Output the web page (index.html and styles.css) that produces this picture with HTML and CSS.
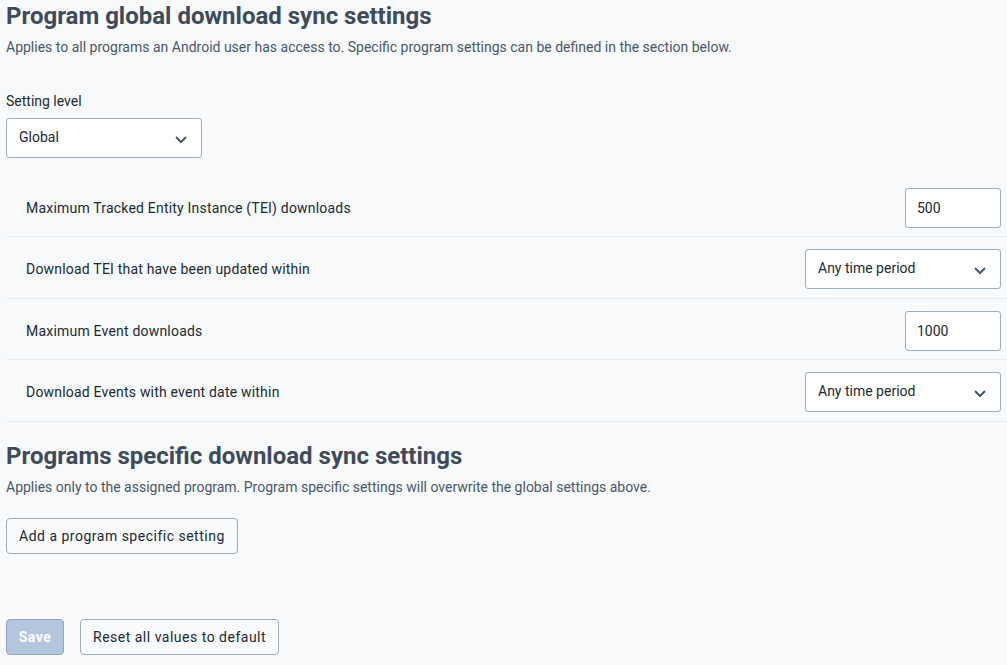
FILE: index.html
```html
<!DOCTYPE html>
<html>
<head>
<meta charset="utf-8">
<link rel="stylesheet" href="styles.css">
</head>
<body>
<div class="page">
  <h2 class="title">Program global download sync settings</h2>
  <p class="sub">Applies to all programs an Android user has access to. Specific program settings can be defined in the section below.</p>

  <div class="field">
    <label class="label">Setting level</label>
    <div class="select level">
      <span>Global</span>
      <svg class="chev" width="12" height="8" viewBox="0 0 12 8"><path d="M1 1 L6 6 L11 1" fill="none" stroke="#4a5768" stroke-width="2"/></svg>
    </div>
  </div>

  <div class="rows">
    <div class="row">
      <span class="rlabel">Maximum Tracked Entity Instance (TEI) downloads</span>
      <div class="input">500</div>
    </div>
    <div class="row">
      <span class="rlabel">Download TEI that have been updated within</span>
      <div class="select wide"><span>Any time period</span><svg class="chev" width="12" height="8" viewBox="0 0 12 8"><path d="M1 1 L6 6 L11 1" fill="none" stroke="#4a5768" stroke-width="2"/></svg></div>
    </div>
    <div class="row">
      <span class="rlabel">Maximum Event downloads</span>
      <div class="input">1000</div>
    </div>
    <div class="row">
      <span class="rlabel">Download Events with event date within</span>
      <div class="select wide"><span>Any time period</span><svg class="chev" width="12" height="8" viewBox="0 0 12 8"><path d="M1 1 L6 6 L11 1" fill="none" stroke="#4a5768" stroke-width="2"/></svg></div>
    </div>
  </div>

  <h2 class="title t2">Programs specific download sync settings</h2>
  <p class="sub">Applies only to the assigned program. Program specific settings will overwrite the global settings above.</p>
  <button class="btn">Add a program specific setting</button>

  <div class="actions">
    <button class="btn save" disabled>Save</button>
    <button class="btn">Reset all values to default</button>
  </div>
</div>
</body>
</html>
```
FILE: styles.css
```css
html, body {
  margin: 0;
  padding: 0;
  background: #f8f9fa;
  font-family: Roboto, "Liberation Sans", sans-serif;
  color: #212934;
}
.page {
  padding: 0 0 0 6px;
}
.title {
  margin: 0;
  padding-top: 2px;
  font-size: 24px;
  line-height: 28px;
  font-weight: 700;
  color: #404b5a;
}
.sub {
  margin: 8px 0 0;
  font-size: 14px;
  line-height: 18px;
  color: #4a5768;
}
.field {
  margin-top: 36px;
}
.label {
  display: block;
  font-size: 14px;
  line-height: 18px;
  margin-bottom: 8px;
}
.select, .input {
  box-sizing: border-box;
  height: 40px;
  background: #fff;
  border: 1px solid #a0adba;
  border-radius: 3px;
  font-size: 14px;
  display: flex;
  align-items: center;
  color: #212934;
  box-shadow: inset 0 0 1px 0 rgba(48,54,60,0.1);
}
.select {
  width: 196px;
  padding: 0 14px 0 12px;
  justify-content: space-between;
}
.select span { margin-top: -3px; }
.chev { margin-top: 3px; }
.input {
  width: 96px;
  padding: 0 11px;
}
.rows {
  margin-top: 17.5px;
}
.row {
  display: flex;
  align-items: center;
  justify-content: space-between;
  padding: 12px 6px 8.5px 20px;
  border-bottom: 1px solid #e8edf2;
}
.rlabel {
  font-size: 14px;
  letter-spacing: 0.2px;
  color: #212934;
}
.t2 {
  margin-top: 18px;
}
.btn {
  box-sizing: border-box;
  height: 36px;
  padding: 0 12px;
  border: 1px solid #a0adba;
  border-radius: 4px;
  background: #f9fafb;
  font-family: Roboto, "Liberation Sans", sans-serif;
  font-size: 14px;
  letter-spacing: 0.5px;
  color: #212934;
  margin-top: 22px;
}
.actions {
  display: flex;
  gap: 16px;
  margin-top: 65px;
}
.actions .btn { margin-top: 0; }
.save {
  background: #b3c6de;
  border-color: #93a6bf;
  color: #fff;
  font-weight: 700;
  width: 58px;
  padding: 0;
}
```
